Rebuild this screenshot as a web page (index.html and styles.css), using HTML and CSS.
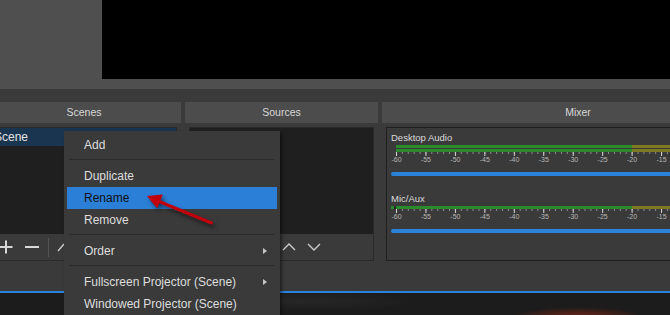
FILE: index.html
```html
<!DOCTYPE html>
<html lang="en">
<head>
<meta charset="utf-8">
<title>OBS</title>
<link rel="stylesheet" href="styles.css">
</head>
<body>
<div class="app">
  <div class="top"><div class="preview"></div></div>

  <div class="docks">
    <section class="dock dock-scenes">
      <div class="dock-title">Scenes</div>
      <div class="dock-body">
        <div class="frame">
          <ul class="list">
            <li class="item selected">Scene</li>
          </ul>
          <div class="toolbar scenes-toolbar">
            <span class="tb-btn"><svg width="14" height="14" viewBox="0 0 14 14"><path d="M7 0.5v13M0.5 7h13" stroke="#d8d8d8" stroke-width="2" fill="none"/></svg></span>
            <span class="tb-btn"><svg width="16" height="14" viewBox="0 0 16 14"><path d="M1 7h14" stroke="#d8d8d8" stroke-width="2" fill="none"/></svg></span>
            <span class="tb-sep"></span>
            <span class="tb-btn narrow"><svg width="10" height="10" viewBox="0 0 10 10"><path d="M2 9L8 2" stroke="#cfcfcf" stroke-width="1.3" fill="none"/></svg></span>
          </div>
        </div>
      </div>
    </section>

    <section class="dock dock-sources">
      <div class="dock-title">Sources</div>
      <div class="dock-body">
        <div class="frame">
          <ul class="list"></ul>
          <div class="toolbar sources-toolbar">
            <span class="tb-btn s"></span>
            <span class="tb-btn s"></span>
            <span class="tb-btn s"></span>
            <span class="tb-sep s"></span>
            <span class="tb-btn s"><svg width="14" height="8" viewBox="0 0 14 8"><path d="M1 7L7 1L13 7" stroke="#cdcdcd" stroke-width="1.4" fill="none"/></svg></span>
            <span class="tb-btn s"><svg width="14" height="8" viewBox="0 0 14 8"><path d="M1 1L7 7L13 1" stroke="#cdcdcd" stroke-width="1.4" fill="none"/></svg></span>
          </div>
        </div>
      </div>
    </section>

    <section class="dock dock-mixer">
      <div class="dock-title">Mixer</div>
      <div class="dock-body">
        <div class="frame mixer-frame">
          <div class="channel">
            <div class="ch-label">Desktop Audio</div>
            <div class="meter stereo"><div class="bar"></div><div class="bar"></div></div>
            <svg class="scale" width="279" height="10" viewBox="0 0 279 10">
              <defs>
                <pattern id="minorA" x="5" y="0" width="5.89" height="2" patternUnits="userSpaceOnUse"><rect width="1" height="2" fill="#8e8e8e"/></pattern>
                <pattern id="majorA" x="5" y="0" width="29.45" height="4" patternUnits="userSpaceOnUse"><rect width="1" height="4" fill="#d4d4d4"/></pattern>
              </defs>
              <rect x="5" y="0" width="274" height="2" fill="url(#minorA)"/>
              <rect x="5" y="0" width="274" height="4" fill="url(#majorA)"/>
              <g class="scale-text">
                <text x="5.5" y="9.5">-60</text><text x="34.95" y="9.5">-55</text><text x="64.4" y="9.5">-50</text><text x="93.85" y="9.5">-45</text><text x="123.3" y="9.5">-40</text><text x="152.75" y="9.5">-35</text><text x="182.2" y="9.5">-30</text><text x="211.65" y="9.5">-25</text><text x="241.1" y="9.5">-20</text><text x="270.55" y="9.5">-15</text>
              </g>
            </svg>
            <div class="slider"></div>
          </div>
          <div class="channel">
            <div class="ch-label">Mic/Aux</div>
            <div class="meter mono"><div class="bar"></div></div>
            <svg class="scale" width="279" height="10" viewBox="0 0 279 10">
              <defs>
                <pattern id="minorB" x="5" y="0" width="5.89" height="2" patternUnits="userSpaceOnUse"><rect width="1" height="2" fill="#8e8e8e"/></pattern>
                <pattern id="majorB" x="5" y="0" width="29.45" height="4" patternUnits="userSpaceOnUse"><rect width="1" height="4" fill="#d4d4d4"/></pattern>
              </defs>
              <rect x="5" y="0" width="274" height="2" fill="url(#minorB)"/>
              <rect x="5" y="0" width="274" height="4" fill="url(#majorB)"/>
              <g class="scale-text">
                <text x="5.5" y="9.5">-60</text><text x="34.95" y="9.5">-55</text><text x="64.4" y="9.5">-50</text><text x="93.85" y="9.5">-45</text><text x="123.3" y="9.5">-40</text><text x="152.75" y="9.5">-35</text><text x="182.2" y="9.5">-30</text><text x="211.65" y="9.5">-25</text><text x="241.1" y="9.5">-20</text><text x="270.55" y="9.5">-15</text>
              </g>
            </svg>
            <div class="slider"></div>
          </div>
        </div>
      </div>
    </section>
  </div>

  <div class="taskbar"></div>

  <div class="menu">
    <div class="menu-item">Add</div>
    <div class="menu-sep"></div>
    <div class="menu-item">Duplicate</div>
    <div class="menu-item active">Rename</div>
    <div class="menu-item">Remove</div>
    <div class="menu-sep"></div>
    <div class="menu-item sub">Order</div>
    <div class="menu-sep"></div>
    <div class="menu-item sub">Fullscreen Projector (Scene)</div>
    <div class="menu-item">Windowed Projector (Scene)</div>
  </div>

  <svg class="annot" width="670" height="315" viewBox="0 0 670 315">
    <g class="arrow">
      <line x1="159" y1="201.5" x2="211.5" y2="223" stroke="#c2000c" stroke-width="3" stroke-linecap="round"/>
      <polygon points="147,196 157.2,208.2 162.8,194.6" fill="#c2000c"/>
    </g>
  </svg>
</div>
</body>
</html>
```

FILE: styles.css
```css
* { box-sizing: border-box; margin: 0; padding: 0; }

html, body {
  width: 670px;
  height: 315px;
  overflow: hidden;
  background: #3a3a3a;
}

body {
  font-family: "Liberation Sans", Arial, sans-serif;
  color: #dcdcdc;
}

.app {
  position: relative;
  width: 670px;
  height: 315px;
  overflow: hidden;
  background: #3a3a3a;
}

/* top preview area */
.top {
  height: 89px;
  background: #4f4f4f;
  padding-left: 102px;
}
.preview {
  height: 79px;
  background: #000;
}

/* docks */
.docks {
  display: flex;
  gap: 4px;
  margin: 13px 0 0 -13px;
  height: 189px;
}
.dock {
  flex: none;
  display: flex;
  flex-direction: column;
}
.dock-scenes { width: 194px; }
.dock-sources { width: 193px; }
.dock-mixer { width: 392px; }

.dock-title {
  height: 21px;
  line-height: 21px;
  background: #4c4c4c;
  text-align: center;
  font-size: 10.5px;
  color: #d8d8d8;
}
.dock-body {
  padding: 4px 4px 0;
}
.frame {
  height: 134px;
  border: 1px solid #2a2a2a;
  display: flex;
  flex-direction: column;
}
.list {
  list-style: none;
  height: 106px;
  background: #1f1f1f;
}
.item {
  height: 18px;
  line-height: 19px;
  font-size: 12px;
  padding-left: 2px;
  color: #e2e2e2;
}
.item.selected {
  background: #1a3550;
}

.toolbar {
  height: 26px;
  display: flex;
  align-items: center;
}
.scenes-toolbar { padding-left: 1px; }
.sources-toolbar { padding-left: 4px; }

.tb-btn {
  flex: none;
  width: 26px;
  height: 26px;
  display: flex;
  align-items: center;
  justify-content: center;
}
.tb-btn.narrow { width: 24px; }
.tb-btn.s { width: 25px; }
.tb-sep {
  flex: none;
  width: 1px;
  height: 19px;
  margin: 0 0 0 3px;
  background: #555;
}
.tb-sep.s { margin: 0 3px; }

/* mixer */
.mixer-frame {
  border-color: #1f1f1f;
  padding-top: 4px;
}
.channel {
  padding-left: 4px;
}
.channel + .channel {
  margin-top: 17px;
}
.ch-label {
  height: 12px;
  line-height: 12px;
  font-size: 9.5px;
  color: #dadada;
}
.meter {
  margin-top: 1px;
}
.meter.stereo {
  margin-left: 5px;
  display: flex;
  flex-direction: column;
  gap: 1px;
}
.meter .bar {
  height: 3px;
  background: linear-gradient(to right, #2b8a2b 0 236px, #7e7a22 236px);
}
.meter.mono .bar {
  background: linear-gradient(to right, #2b8a2b 0 3px, #262626 3px 5px, #2b8a2b 5px 241px, #7e7a22 241px);
}
.scale {
  display: block;
  overflow: visible;
}
.scale-text text {
  font-family: "Liberation Sans", Arial, sans-serif;
  font-size: 7px;
  fill: #b8b8b8;
  text-anchor: middle;
}
.slider {
  margin-top: 10px;
  height: 4px;
  background: #2a82da;
  border-radius: 2px 0 0 2px;
}

/* bottom strip */
.taskbar {
  height: 24px;
  border-top: 2px solid #2a82da;
  background:
    radial-gradient(ellipse 70px 12px at 578px 26px, rgba(150, 40, 20, 0.85), rgba(150, 40, 20, 0) 100%),
    radial-gradient(ellipse 120px 10px at 300px 8px, rgba(60, 60, 60, 0.35), rgba(60, 60, 60, 0) 100%),
    #1c1c1c;
}

/* context menu */
.menu {
  position: absolute;
  left: 64px;
  top: 131px;
  width: 216px;
  height: 200px;
  padding-top: 3px;
  background: #3a3a3a;
  box-shadow: 2px 2px 3px rgba(0, 0, 0, 0.45);
}
.menu-item {
  position: relative;
  height: 22px;
  line-height: 22px;
  margin: 0 3px;
  padding-left: 17px;
  font-size: 12px;
  color: #dedede;
  white-space: nowrap;
}
.menu-item.active {
  background: #2b7fd6;
  color: #111;
}
.menu-item.sub::after {
  content: "";
  position: absolute;
  right: 10px;
  top: 8px;
  border-left: 4px solid #c8c8c8;
  border-top: 3.5px solid transparent;
  border-bottom: 3.5px solid transparent;
}
.menu-sep {
  height: 1px;
  margin: 3px 6px 5px 5px;
  background: #2a2a2a;
}

/* annotation arrow */
.annot {
  position: absolute;
  left: 0;
  top: 0;
  pointer-events: none;
}
.arrow {
  filter: drop-shadow(2px 3px 2px rgba(0, 0, 0, 0.55));
}
```
